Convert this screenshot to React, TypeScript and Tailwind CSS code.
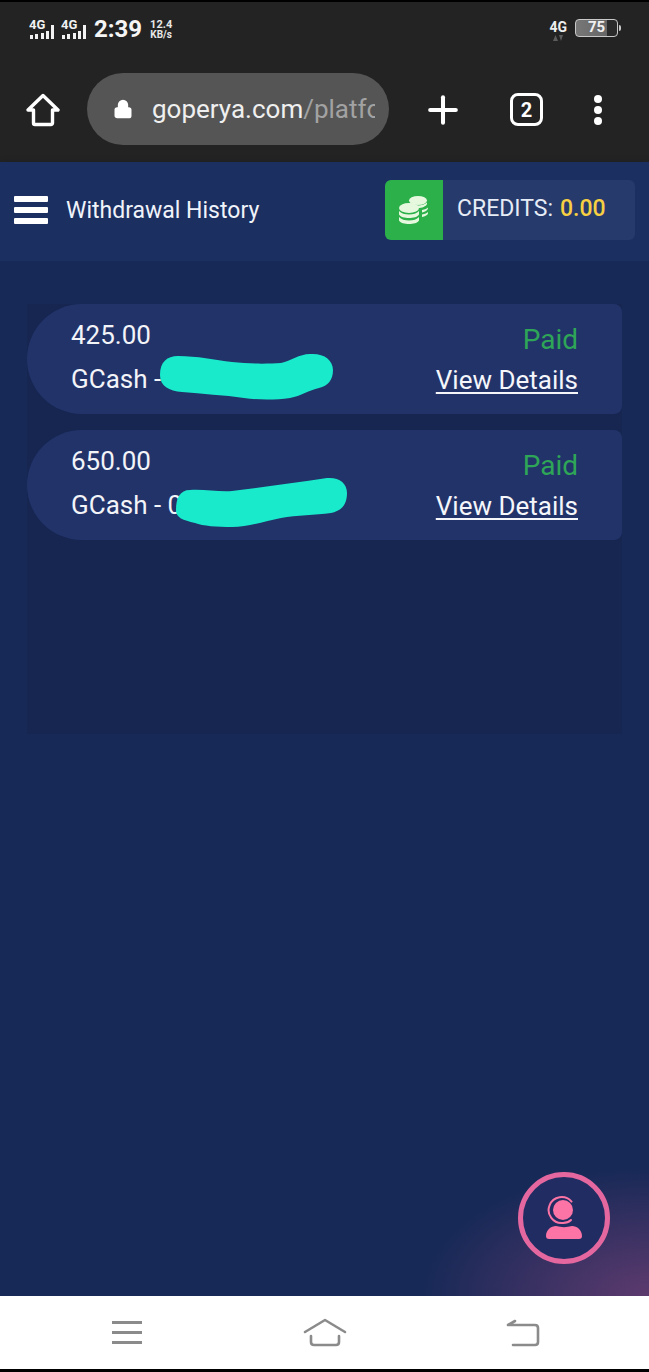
import React from 'react';
import { Lock, Plus } from 'lucide-react';

const font = "font-['Roboto',sans-serif]";

const SignalIcon = () => (
  <svg width="27" height="22" viewBox="0 0 27 22" fill="#f2f2f2">
    <text x="0" y="11" fontSize="13" fontWeight="700" fontFamily="Roboto, sans-serif">4G</text>
    <rect x="1" y="17" width="3" height="4" />
    <rect x="6" y="16" width="3" height="5" />
    <rect x="12" y="15" width="3" height="6" />
    <rect x="17" y="13" width="3" height="8" />
    <rect x="22" y="7" width="3" height="14" />
  </svg>
);

const StatusBar = () => (
  <div className="flex h-[54px] items-center justify-between pl-[29px] pr-[28px]">
    <div className="flex items-center gap-[5px]">
      <SignalIcon />
      <SignalIcon />
      <span className="ml-[1px] text-[24px] font-bold leading-none text-[#f5f5f5]">2:39</span>
      <div className="ml-[3px] flex flex-col items-center text-[11px] font-bold leading-[11px] text-[#e8e8e8]">
        <span>12.4</span>
        <span className="text-[10px] leading-[10px]">KB/s</span>
      </div>
    </div>
    <div className="flex items-center">
      <div className="mr-[8px] mt-[2px] flex flex-col items-center">
        <span className="text-[14px] font-bold leading-[15px] text-[#eeeeee]">4G</span>
        <svg width="12" height="6" viewBox="0 0 12 6" fill="#5c5c5c">
          <path d="M1 6 3.500 0 6 6zM7 0h4L9 6z" />
        </svg>
      </div>
      <div className="mb-[3px] flex h-[18px] w-[43px] items-center justify-center rounded-[4px] border border-[#c8c8c8] bg-[linear-gradient(90deg,#777_0%,#666_75%,#2a2a2a_75%)] text-[15px] font-bold leading-none text-[#f0f0f0]">
        75
      </div>
      <div className="mb-[3px] ml-[1px] h-[6px] w-[2px] rounded-r-[2px] bg-[#c8c8c8]" />
    </div>
  </div>
);

const HomeGlyph = () => (
  <svg width="34" height="34" viewBox="0 0 34 34" fill="none" stroke="#fff" strokeWidth="3.4" strokeLinejoin="round">
    <path d="M2 17 17 2.500 32 17h-5.500v13a1.500 1.500 0 0 1-1.500 1.500H9A1.500 1.500 0 0 1 7.500 30V17z" />
  </svg>
);

const BrowserBar = () => (
  <div className="flex h-[106px] items-start pl-[26px] pt-[17px]">
    <div className="mt-[20px] flex w-[34px] justify-center">
      <HomeGlyph />
    </div>
    <div className="ml-[27px] flex h-[72px] w-[302px] items-center overflow-hidden rounded-full bg-[#555555] pl-[26px]">
      <Lock size={20} fill="#fff" color="#fff" strokeWidth={2.4} />
      <span className="ml-[19px] w-[223px] overflow-hidden whitespace-nowrap text-[26px] text-[#efefef]">
        goperya.com<span className="text-[#a2a2a2]">/platfo</span>
      </span>
    </div>
    <div className="ml-[32px] mt-[15px]">
      <Plus size={44} color="#fff" strokeWidth={2.2} />
    </div>
    <div className="ml-[45px] mt-[20px] flex h-[33px] w-[33px] items-center justify-center rounded-[8px] border-[3px] border-white text-[20px] font-bold text-white">
      2
    </div>
    <div className="ml-[51px] mt-[22px] flex flex-col gap-[3px]">
      <div className="h-[8px] w-[8px] rounded-full bg-white" />
      <div className="h-[8px] w-[8px] rounded-full bg-white" />
      <div className="h-[8px] w-[8px] rounded-full bg-white" />
    </div>
  </div>
);

const CoinsGlyph = () => (
  <svg width="32" height="32" viewBox="0 0 32 32" fill="#e6f8de">
    <ellipse cx="20" cy="6.500" rx="9" ry="4.500" />
    <path d="M29 10c-1 2.500-5 4-9 4s-6-1-7-2l-1-1.500V8.500c2 2 5 3 8 3s7-1 9-3zM30 14c0 2-3 4-6 4.500V16c3-.5 5-1.500 6-2.500zM30 19c0 2-3 3.500-6 4v-2.500c3-.5 5-1.500 6-2.500z" />
    <ellipse cx="11" cy="14" rx="10" ry="5" />
    <path d="M1 17c2 2.500 6 3.500 10 3.500s8-1 10-3.500v3.500c-1 2.500-6 3.500-10 3.500S2 23 1 20.500zM1 23c2 2.500 6 3.500 10 3.500s8-1 10-3.500v3.500c-1 2.500-6 3.500-10 3.500S2 29 1 26.500z" />
  </svg>
);

const PageHeader = () => (
  <div className="flex h-[99px] items-center bg-[#1c2f61] px-[14px] shadow-[0_3px_8px_rgba(10,20,50,0.45)]">
    <div className="mb-[4px] flex w-[34px] flex-col gap-[5px]">
      <div className="h-[6px] rounded-[1px] bg-white" />
      <div className="h-[6px] rounded-[1px] bg-white" />
      <div className="h-[6px] rounded-[1px] bg-white" />
    </div>
    <span className="mb-[1px] ml-[18px] text-[23px] text-[#f0f4fa]">Withdrawal History</span>
    <div className="mb-[4px] ml-auto flex h-[60px] w-[250px] overflow-hidden rounded-[6px] bg-[#263a6c]">
      <div className="flex w-[58px] items-center justify-center bg-[#2bb04a]">
        <CoinsGlyph />
      </div>
      <div className="ml-[14px] flex items-center text-[23px] text-[#e6ecf6]">
        CREDITS:
        <span className="ml-[7px] font-medium text-[#f7cf43]">0.00</span>
      </div>
    </div>
  </div>
);

const WithdrawalRow = ({ amount, account, scribble }: { amount: string; account: string; scribble: string }) => (
  <div className="relative flex h-[110px] items-start justify-between rounded-l-[55px] rounded-r-[8px] bg-[#22336a] pl-[44px] pr-[44px] pt-[16px]">
    <div className="text-[26px] leading-[30px] text-[#f2f4f8]">
      <div>{amount}</div>
      <div className="mt-[14px]">{account}</div>
    </div>
    <div className="text-right text-[26px] leading-[30px]">
      <div className="mt-[5px] text-[28px] text-[#2ea557]">Paid</div>
      <div className="mt-[10px] text-[#f4f6fa] underline underline-offset-[3px]">View Details</div>
    </div>
    <svg className="absolute left-0 top-0" width="400" height="110" viewBox="0 0 400 110" fill="#19eacb">
      <path d={scribble} />
    </svg>
  </div>
);

const Fab = () => (
  <div className="absolute bottom-[32px] right-[39px] flex h-[92px] w-[92px] items-center justify-center rounded-full border-[5px] border-[#e4689f] bg-[#212d62]">
    <svg width="38" height="44" viewBox="0 0 38 44" fill="#fb74a5">
      <circle cx="18" cy="14" r="10" />
      <path d="M26.500 5.600A13 13 0 1 0 18 27" fill="none" stroke="#fb74a5" strokeWidth="2" strokeLinecap="round" />
      <path d="M18 27c3 0 6-1 8-3" fill="none" stroke="#fb74a5" strokeWidth="2" strokeLinecap="round" />
      <path d="M1 40c0-6 5-10 10-10 5 1.500 11 1.500 16 0 5 0 10 4 10 10 0 2-1 3-3 3H4c-2 0-3-1-3-3z" />
    </svg>
  </div>
);

const SystemNav = () => (
  <div className="flex h-[73px] items-center bg-white pl-[112px]">
    <div className="flex w-[30px] flex-col gap-[7px]">
      <div className="h-[3px] bg-[#8b8b8b]" />
      <div className="h-[3px] bg-[#8b8b8b]" />
      <div className="h-[3px] bg-[#8b8b8b]" />
    </div>
    <svg className="ml-[161px]" width="44" height="30" viewBox="0 0 44 30" fill="none" stroke="#8b8b8b" strokeWidth="2.600" strokeLinecap="round" strokeLinejoin="round">
      <path d="M2 14 22 2l20 12M8 18v6c0 2 1 3 3 3h22c2 0 3-1 3-3v-6" />
    </svg>
    <svg className="ml-[159px]" width="34" height="28" viewBox="0 0 34 28" fill="none" stroke="#8b8b8b" strokeWidth="2.600" strokeLinecap="round" strokeLinejoin="round">
      <path d="M3 6h26c2 0 3 1 3 3v14c0 2-1 3-3 3H7M9 2 2 6" />
    </svg>
  </div>
);

export default function App() {
  return (
    <div className={`${font} flex h-[1372px] w-[649px] flex-col overflow-hidden bg-black`}>
      <div className="h-[162px] border-t-2 border-black bg-[#232323]">
        <StatusBar />
        <BrowserBar />
      </div>
      <PageHeader />
      <div className="relative flex-1 overflow-hidden bg-[#172957] px-[27px] pt-[43px]">
        <div className="pointer-events-none absolute bottom-0 right-0 h-[130px] w-[230px] bg-[radial-gradient(ellipse_at_100%_100%,#5d3a6e_0%,rgba(93,58,110,0)_70%)]" />
        <div className="relative flex h-[430px] w-[595px] flex-col gap-[16px] bg-[#162651]">
          <WithdrawalRow
            amount="425.00"
            account="GCash -"
            scribble="M133 71C133 58 140 52 151 52C170 52 188 56 205 58C222 60 240 60 254 59C264 57 272 50 283 50C297 49 306 56 306 66C306 76 301 82 292 84C282 86 274 92 263 94C248 96 232 96 217 94C197 91 175 90 155 88C142 87 133 82 133 71Z"
          />
          <WithdrawalRow
            amount="650.00"
            account="GCash - 0"
            scribble="M149 80C149 68 153 60 163 60C176 59 192 62 205 61C236 57 268 53 300 48C312 47 320 53 320 63C320 75 314 81 304 83C288 85 270 85 254 88C238 91 222 97 205 97C190 97 176 96 168 93C156 90 149 88 149 80Z"
          />
        </div>
        <Fab />
      </div>
      <SystemNav />
      <div className="h-[3px] bg-black" />
    </div>
  );
}
